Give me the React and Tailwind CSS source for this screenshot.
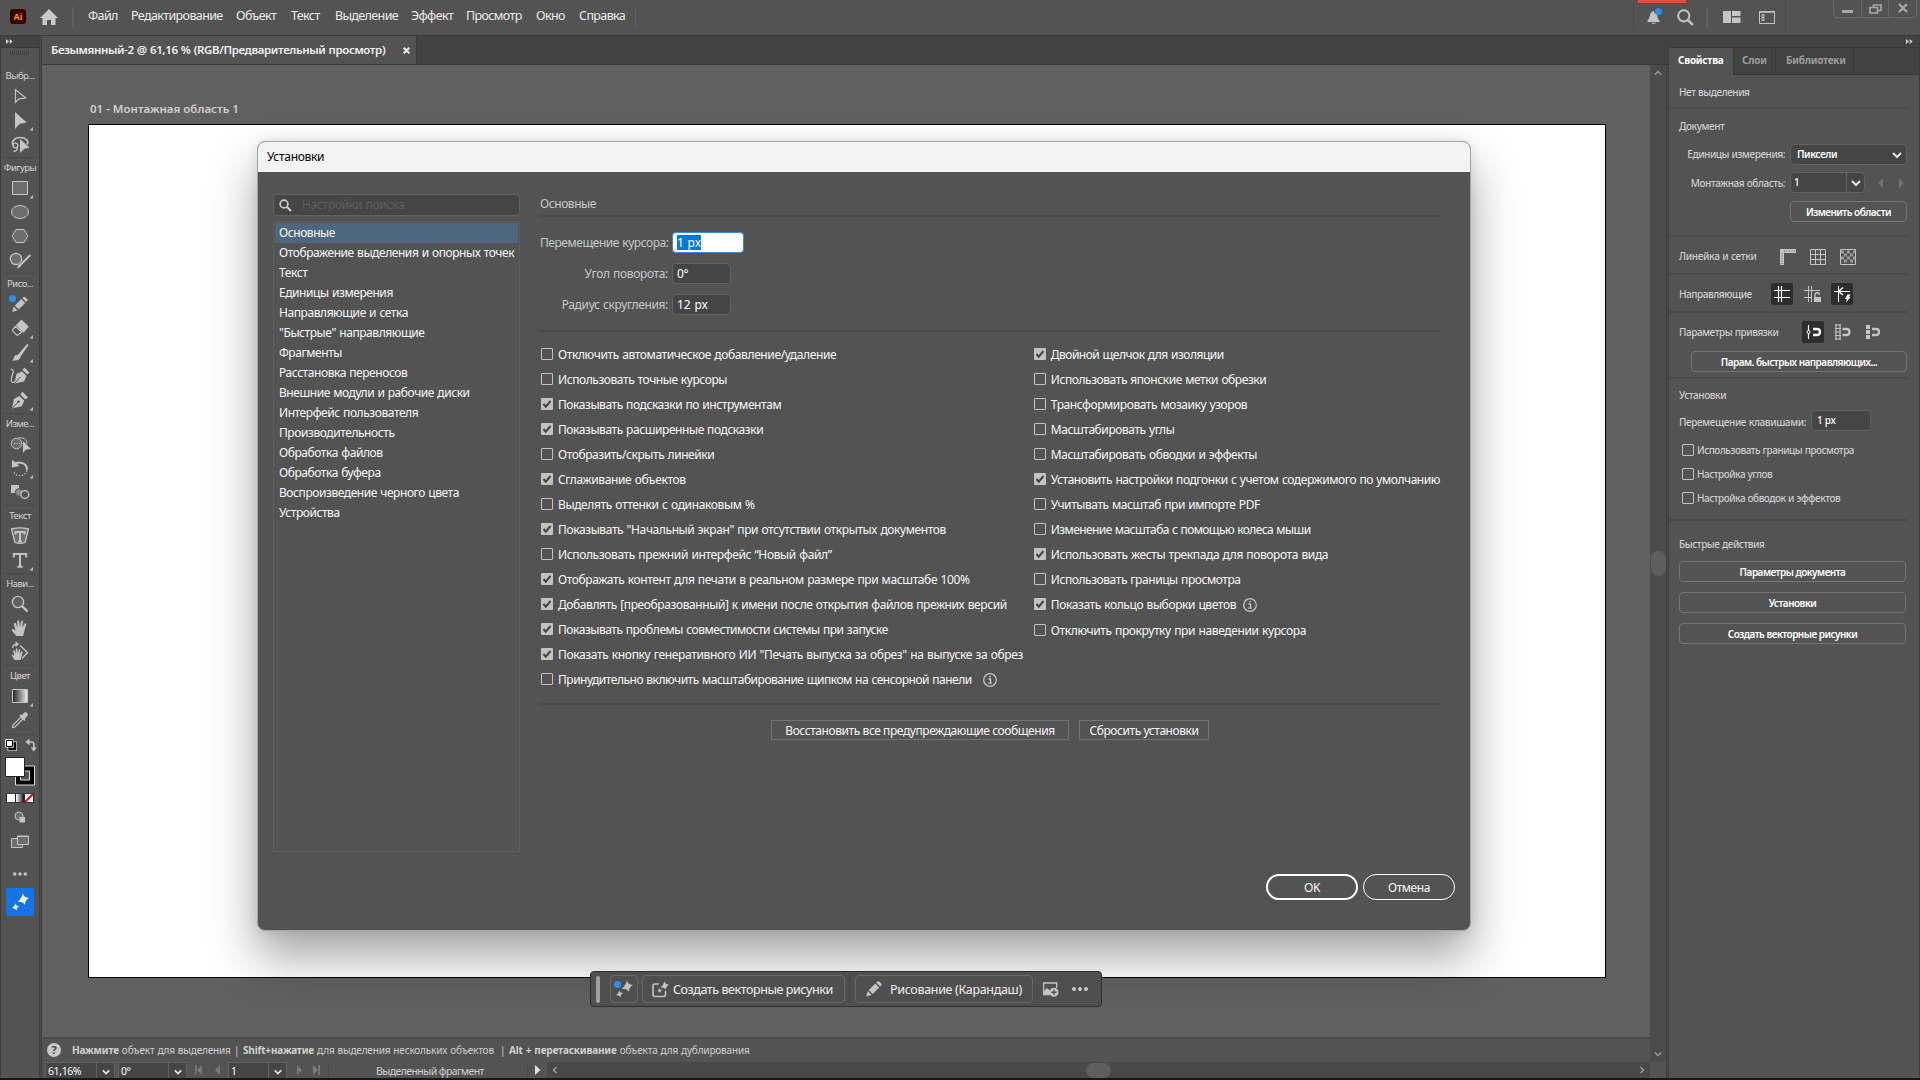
import { useState } from 'react';
import clsx from 'clsx';

const MENU = [
  ['Файл', 'w-[43px]'],
  ['Редактирование', 'w-[105px]'],
  ['Объект', 'w-[55px]'],
  ['Текст', 'w-[44px]'],
  ['Выделение', 'w-[76px]'],
  ['Эффект', 'w-[55px]'],
  ['Просмотр', 'w-[70px]'],
  ['Окно', 'w-[43px]'],
  ['Справка', 'w-[56px]'],
];

const CATEGORIES = [
  'Основные',
  'Отображение выделения и опорных точек',
  'Текст',
  'Единицы измерения',
  'Направляющие и сетка',
  '"Быстрые" направляющие',
  'Фрагменты',
  'Расстановка переносов',
  'Внешние модули и рабочие диски',
  'Интерфейс пользователя',
  'Производительность',
  'Обработка файлов',
  'Обработка буфера',
  'Воспроизведение черного цвета',
  'Устройства',
];

const LEFT_OPTIONS = [
  { label: 'Отключить автоматическое добавление/удаление', track: 'tracking-[-0.38px]' },
  { label: 'Использовать точные курсоры' },
  { label: 'Показывать подсказки по инструментам', on: true },
  { label: 'Показывать расширенные подсказки', on: true },
  { label: 'Отобразить/скрыть линейки' },
  { label: 'Сглаживание объектов', on: true, track: 'tracking-[-0.38px]' },
  { label: 'Выделять оттенки с одинаковым %', track: 'tracking-[-0.36px]' },
  { label: 'Показывать "Начальный экран" при отсутствии открытых документов', on: true, track: 'tracking-[-0.39px]' },
  { label: 'Использовать прежний интерфейс “Новый файл”', track: 'tracking-[-0.37px]' },
  { label: 'Отображать контент для печати в реальном размере при масштабе 100%', on: true, track: 'tracking-[-0.38px]' },
  { label: 'Добавлять [преобразованный] к имени после открытия файлов прежних версий', on: true, track: 'tracking-[-0.4px]' },
  { label: 'Показывать проблемы совместимости системы при запуске', on: true, track: 'tracking-[-0.46px]' },
  { label: 'Показать кнопку генеративного ИИ "Печать выпуска за обрез" на выпуске за обрез', on: true, track: 'tracking-[-0.35px]' },
  { label: 'Принудительно включить масштабирование щипком на сенсорной панели', track: 'tracking-[-0.48px]', info: 'ml-[11px]' },
];

const RIGHT_OPTIONS = [
  { label: 'Двойной щелчок для изоляции', on: true, track: 'tracking-[-0.5px]' },
  { label: 'Использовать японские метки обрезки' },
  { label: 'Трансформировать мозаику узоров' },
  { label: 'Масштабировать углы' },
  { label: 'Масштабировать обводки и эффекты' },
  { label: 'Установить настройки подгонки с учетом содержимого по умолчанию', on: true },
  { label: 'Учитывать масштаб при импорте PDF' },
  { label: 'Изменение масштаба с помощью колеса мыши', track: 'tracking-[-0.58px]' },
  { label: 'Использовать жесты трекпада для поворота вида', on: true, track: 'tracking-[-0.38px]' },
  { label: 'Использовать границы просмотра' },
  { label: 'Показать кольцо выборки цветов', on: true, info: 'ml-[7px]', track: 'tracking-[-0.39px]' },
  { label: 'Отключить прокрутку при наведении курсора', track: 'tracking-[-0.37px]' },
];

const ICON = '#c4c4c4';

// Every tool is drawn in a 40x24 cell
const TOOLS = {
  select: <path d="M15.500 5.800v12.600l3.600-3.600 6.600-.9z" fill="none" stroke={ICON} strokeWidth="1.200" />,
  direct: <path d="M15 4v17l4.400-5 7.400-1.400z" fill={ICON} />,
  lasso: (
    <>
      <path d="M13.500 13.500c-3-3.500 1-8 6.500-8s9.500 3.500 7 7" fill="none" stroke={ICON} strokeWidth="1.600" />
      <circle cx="15.500" cy="13.500" r="2.400" fill="none" stroke={ICON} strokeWidth="1.300" />
      <path d="M17.500 15c0 3-2 4.500-4 4.500" fill="none" stroke={ICON} strokeWidth="1.300" />
      <path d="M20 7v14l4-4 5.500-1.500z" fill={ICON} />
    </>
  ),
  rect: <path d="M12.500 5.500h15v13h-15z" fill="#6e6e6e" stroke={ICON} />,
  ellipse: <ellipse cx="20" cy="12" rx="8.500" ry="6.500" fill="#6e6e6e" stroke={ICON} />,
  polygon: <path d="M12 12l4-6.500h8l4 6.500-4 6.500h-8z" fill="#6e6e6e" stroke={ICON} />,
  shaper: (
    <>
      <circle cx="16" cy="11" r="5.700" fill="#6e6e6e" stroke={ICON} strokeWidth="1.200" />
      <path d="M16.500 20.500c1-2.500 1.500-4.500 3.500-5l9-9c1.500-1 2.800.3 1.800 1.700l-9 9c-1 2-2.800 3.500-5.300 3.300z" fill={ICON} stroke="#535353" strokeWidth=".6" />
    </>
  ),
  pencil: (
    <>
      <path d="M12.200 20l1.600-5.400 3.800 3.800zM14.800 13.600l6.500-6.500 3.900 3.900-6.500 6.500zM22.300 6.100l1.600-1.400c.8-.6 4.300 2.800 3.600 3.700l-1.400 1.600z" fill={ICON} />
      <circle cx="12.500" cy="6.500" r="3.500" fill="#2d8ceb" />
    </>
  ),
  eraser: (
    <>
      <path d="M21.500 3.500l7.300 7.300-5.300 6-7.700-7.600z" fill={ICON} />
      <path d="M15.500 10.300l-2.600 3.200c-.6.700-.4 1.300 0 1.700l3.600 3.600c.6.500 1.200.4 1.700 0l3.500-2.600z" fill="none" stroke={ICON} strokeWidth="1.200" />
    </>
  ),
  brush: <path d="M12 20.300c2-1 1.500-2.600 2.400-4 1-1.500 2.300-1.600 3.200-1.200L27 4.200c.8-.6 1.700.2 1.200 1.200l-7.700 11.300c.4 2.600-4 4.500-8.500 3.600z" fill={ICON} />,
  curvature: (
    <>
      <path d="M10.500 5c3 0 3.300 2.500 2 5.500s-2 8 .5 8c1.500 0 2.500-1 3.500-2" fill="none" stroke={ICON} strokeWidth="1.200" />
      <path d="M14.500 19.500l2-9.500 5.500-2.500 4.500 4.600-2.500 5.400zM22.500 6l2-2.500 5 5-2.300 2z" fill={ICON} />
      <path d="M14.500 19.500l6-6.500" stroke="#535353" strokeWidth="1" />
    </>
  ),
  pen: (
    <>
      <path d="M12 20.500l2-9.800 5.500-2.700 4.800 4.700-2.600 5.600zM20.300 6.500l2.200-2.700 5.500 5.400-2.500 2.200z" fill={ICON} />
      <path d="M12 20.500l6.300-6.700" stroke="#535353" strokeWidth="1" />
      <circle cx="18.600" cy="13.600" r="1.200" fill="#535353" />
    </>
  ),
  builder: (
    <>
      <circle cx="16.500" cy="11.500" r="5.300" fill="#6e6e6e" stroke={ICON} />
      <path d="M17.500 6.500c2-1.500 9-1.500 9.500 5" fill="none" stroke={ICON} />
      <path d="M14 11.500h9" stroke={ICON} strokeDasharray="1 1.500" />
      <path d="M23 9v12l3-3.500 5-.5z" fill={ICON} />
    </>
  ),
  rotate: (
    <>
      <path d="M14.500 8.500c3-3.500 13-2.500 12.500 5.500" fill="none" stroke={ICON} strokeWidth="2" />
      <path d="M12 3.500v8l7.500-1.500z" fill={ICON} />
      <path d="M26.800 14.500c-1 6-10.500 7.300-13.300 1" fill="none" stroke={ICON} strokeWidth="1.400" strokeDasharray="1.300 1.700" />
    </>
  ),
  blend: (
    <>
      <path d="M11 5h8v8h-8z" fill={ICON} />
      <circle cx="19" cy="12.500" r="3.800" fill="#8a8a8a" stroke="#535353" />
      <circle cx="24.800" cy="14.500" r="3.900" fill="#535353" stroke={ICON} strokeWidth="1.300" />
    </>
  ),
  touchType: (
    <>
      <path d="M11.500 5c5-1.300 12-1.300 17 0l-3.500 13.500c-3 1-7 1-10 0z" fill="#6e6e6e" stroke={ICON} strokeWidth="1.300" />
      <path d="M15.500 10.500V8h9v2.500M20 8v9.500M18 17.500h4" fill="none" stroke={ICON} strokeWidth="2" />
    </>
  ),
  type: <path d="M13.800 9.500V6h12.400v3.500M20 6v12.500M17.300 18.700h5.400" fill="none" stroke={ICON} strokeWidth="2" />,
  zoom: (
    <>
      <circle cx="18" cy="10" r="5.600" fill="#606060" stroke={ICON} strokeWidth="1.400" />
      <path d="M22 14l5.500 5.500" stroke={ICON} strokeWidth="2.400" />
    </>
  ),
  hand: (
    <path d="M16 20c-.5-2-4.500-5-4.200-6.500.5-1 2.200 0 3.700 1.500L14 8c-.2-1.500 1.500-1.700 2-.3l1.500 4-.3-6.300c0-1.600 1.800-1.600 2 0l.8 6 1-5.800c.3-1.500 2-1.200 1.900.3l-.6 6 2-4c.7-1.300 2.200-.7 1.800.8l-2 7c-.4 1.800-.6 3-1.100 4.300z" fill={ICON} />
  ),
  rotateView: (
    <>
      <path d="M14.500 20c-.5-2-3-4-2.800-5 .5-.9 1.600 0 2.600 1l-1-5c-.1-1.200 1.300-1.300 1.700-.2l1 3-.1-4.600c0-1.200 1.400-1.200 1.500 0l.5 4.500.9-4c.3-1.200 1.600-1 1.500.3l-.6 4.200 1.600-2.500c.6-1 1.700-.4 1.400.7L20.500 20z" fill={ICON} />
      <path d="M12.500 8c.5-3 2.500-4 5-4M15.500 2l2.500 2-2.500 2.500M20 5.500l7.500 7-5.500 6" fill="none" stroke={ICON} strokeWidth="1.300" />
    </>
  ),
  gradient: (
    <>
      <defs>
        <linearGradient id="toolGradient"><stop stopColor="#222" /><stop offset="1" stopColor="#eee" /></linearGradient>
      </defs>
      <path d="M12.500 5.500h15v13h-15z" fill="url(#toolGradient)" stroke={ICON} />
    </>
  ),
  dropper: (
    <>
      <path d="M12.500 19.500l.5-2.500 8-8 2 2-8 8z" fill="none" stroke={ICON} strokeWidth="1.200" />
      <path d="M19.300 7.500l1-1 1.500.8 2.300-2.600c1.800-1.600 5 1 3.300 3.200l-2.600 2.500.7 1.500-1 1z" fill={ICON} />
    </>
  ),
};

const TOOL_GROUPS = [
  { label: 'Выбр...', tools: ['select', 'direct+', 'lasso'] },
  { label: 'Фигуры', tools: ['rect+', 'ellipse', 'polygon', 'shaper'] },
  { label: 'Рисо...', tools: ['pencil', 'eraser+', 'brush+', 'curvature', 'pen+'] },
  { label: 'Изме...', tools: ['builder', 'rotate+', 'blend'] },
  { label: 'Текст', tools: ['touchType', 'type+'] },
  { label: 'Нави...', tools: ['zoom', 'hand', 'rotateView'] },
  { label: 'Цвет', tools: ['gradient+', 'dropper'] },
];

function Chevron({ dir = 'down', size = 10, color = '#e6e6e6', width = 2 }) {
  const d = {
    down: 'M1 3l4 4 4-4',
    up: 'M1 7l4-4 4 4',
    left: 'M7 1L3 5l4 4',
    right: 'M3 1l4 4-4 4',
  }[dir];
  return (
    <svg width={size} height={size} viewBox="0 0 10 10" fill="none" stroke={color} strokeWidth={width}>
      <path d={d} />
    </svg>
  );
}

function DoubleChevron() {
  return (
    <svg width="7" height="5" viewBox="0 0 7 5" fill="#d0d0d0">
      <path d="M0 0l3 2.500L0 5zM3.700 0l3 2.500-3 2.500z" />
    </svg>
  );
}

function Sparkles({ size = 18, color = '#fff' }) {
  return (
    <svg width={size} height={size} viewBox="0 0 18 18" fill={color}>
      <path d="M12 0q.3 4.600 6 5-4.400 2.300-4 7-2.400-3.800-7.500-3Q10.800 5.500 12 0z" />
      <path d="M4.300 10.200q.3 2.600 3.700 2.800-2.700 1.300-2.500 4.200-1.500-2.300-4.500-1.900 2.700-1.900 3.300-5.100z" />
    </svg>
  );
}

function Checkbox({ on }) {
  if (!on) return <span className="size-3 shrink-0 rounded-[1px] border border-[#c2c2c2]" />;
  return (
    <svg className="size-3 shrink-0" viewBox="0 0 12 12">
      <rect width="12" height="12" rx="1" fill="#c2c2c2" />
      <path d="M2.500 6l2.300 2.700L9.500 3" fill="none" stroke="#444" strokeWidth="2" />
    </svg>
  );
}

function InfoIcon({ className }) {
  return (
    <svg className={clsx('size-[14px] shrink-0', className)} viewBox="0 0 14 14" fill="none" stroke="#c8c8c8">
      <circle cx="7" cy="7" r="6.300" strokeWidth="1.200" />
      <path d="M5.500 6h2v4M5.300 10.200h3.600M6.300 3.700h1.500" strokeWidth="1.300" />
    </svg>
  );
}

function TopBar() {
  return (
    <header className="flex h-[35px] shrink-0 bg-[#535353]">
      <span className="mt-[9px] ml-[10px] flex h-[15px] w-4 items-center justify-center rounded-[3px] bg-[#330000] text-[9px] font-bold text-[#ff9a00]">
        Ai
      </span>
      <svg className="mt-[9px] ml-[14px] h-4 w-[18px]" viewBox="0 0 18 16" fill="#c8c8c8">
        <path d="M9 0l9 9h-2.500v7H11v-5H7v5H2.500V9H0z" />
      </svg>
      <span className="mt-[7px] ml-[14px] h-5 w-[2px] bg-[#5e5e5e]" />
      <nav className="ml-[14px] flex h-8 items-center text-[12.5px] tracking-[-0.62px] text-[#ebebeb]">
        {MENU.map(([label, width]) => (
          <span key={label} className={clsx('whitespace-nowrap', width)}>{label}</span>
        ))}
      </nav>
      <span className="mt-[7px] h-5 w-px bg-[#626262]" />

      <div className="ml-auto flex h-[35px] w-[287px]">
        <span className="mt-1 h-[26px] w-px bg-[#4a4a4a]" />
        <div className="relative ml-[13px] mt-2 w-4">
          <svg width="16" height="18" viewBox="0 0 16 18" fill="#c4c4c4">
            <path d="M5.500 3.500C2.500 4.500 3.500 9.500.5 12.800V14h12v-1.200C10 10.500 10.500 8 10 6c-2-.2-3-1-3-3zM4.500 14.800h4.500c-.5 1.500-4 1.500-4.500 0z" />
            <circle cx="11.500" cy="3.500" r="3.500" fill="#2d8ceb" />
          </svg>
          <span className="absolute -top-2 -left-[10px] h-1 w-[50px] border border-t-0 border-[#9a2b20] bg-[#dd5144]" />
        </div>
        <svg className="mt-[9px] ml-[14px]" width="17" height="17" viewBox="0 0 17 17" fill="none" stroke="#c4c4c4">
          <circle cx="6.800" cy="6.800" r="5.600" strokeWidth="2" />
          <path d="M11 11l4.800 4.800" strokeWidth="2.500" />
        </svg>
        <span className="mt-[7px] ml-3 h-5 w-[2px] bg-[#5e5e5e]" />
        <svg className="mt-[11px] ml-[15px]" width="18" height="12" viewBox="0 0 18 12" fill="#c4c4c4">
          <path d="M0 0h8v12H0zM9 0h8.500v5H9zM9 6.500h8.500V12H9z" />
        </svg>
        <svg className="mt-[11px] ml-[18px]" width="16" height="13" viewBox="0 0 16 13" fill="none" stroke="#c4c4c4">
          <path d="M.5 .5h15v12H.5z" />
          <path d="M.5 1h15" strokeWidth="1.500" />
          <path d="M3 3.500h2v6H3zM3 6.500h2" />
        </svg>
        <span className="ml-[10px] h-8 w-px bg-[#4a4a4a]" />
        <div className="ml-[47px] flex h-[18px] w-[84px] rounded-b border border-t-0 border-[#686868]">
          <span className="flex w-[28px] justify-center border-r border-[#686868]">
            <span className="mt-[10px] h-[3px] w-[11px] bg-[#a8a8a8]" />
          </span>
          <span className="flex w-[27px] justify-center border-r border-[#686868] pt-1">
            <svg width="13" height="10" viewBox="0 0 13 10" fill="none" stroke="#a8a8a8" strokeWidth="1.600">
              <path d="M4.500 3V1H12v5.500H9M1 3.500h7.500V9H1z" />
            </svg>
          </span>
          <span className="flex flex-1 justify-center pt-[3px]">
            <svg width="10" height="10" viewBox="0 0 10 10" stroke="#a8a8a8" strokeWidth="2.200">
              <path d="M1 1l8 8M9 1L1 9" />
            </svg>
          </span>
        </div>
      </div>
    </header>
  );
}

function Toolbar() {
  return (
    <aside className="flex w-[42px] shrink-0 border-l border-[#3c3c3c] bg-[#535353]">
      <div className="flex w-[38px] flex-col">
        <div className="flex h-3 items-center border-b border-[#3a3a3a] bg-[#424242] pl-[5px]">
          <DoubleChevron />
        </div>
        <div className="mt-[3px] ml-[9px] flex h-1 gap-px">
          {Array.from({ length: 10 }, (_, i) => <span key={i} className="w-px bg-[#3f3f3f]" />)}
        </div>
        <div className="mt-[9px] flex flex-col">
          {TOOL_GROUPS.map(({ label, tools }, i) => (
            <div key={label} className="flex flex-col">
              <div className={clsx('mx-1 mt-[1px] h-px', i > 0 && 'bg-[#484848]')} />
              <div className="mt-[2px] h-4 text-center text-[9.5px] leading-4 tracking-[-0.5px] text-[#d4d4d4]">{label}</div>
              {tools.map((tool) => (
                <svg key={tool} className="-ml-px h-6 w-10" viewBox="0 0 40 24">
                  {TOOLS[tool.replace('+', '')]}
                  {tool.endsWith('+') && <path d="M33 19v3.500h-3.500z" fill={ICON} />}
                </svg>
              ))}
            </div>
          ))}
        </div>
        <svg className="-ml-px h-[188px] w-10" viewBox="0 0 40 188">
          <defs>
            <linearGradient id="modeGradient"><stop stopColor="#fff" /><stop offset="1" stopColor="#111" /></linearGradient>
          </defs>
          <path d="M5 2.500h30" stroke="#484848" />
          {/* default colours + swap */}
          <path d="M9.500 11.500h5.500v5.500h-5.500z" fill="none" stroke="#ddd" strokeWidth="4" />
          <path d="M9.500 11.500h5.500v5.500h-5.500z" fill="none" stroke="#000" strokeWidth="2.500" />
          <path d="M5.500 7.500h7.500v7.500H5.500z" fill="#fff" stroke="#ddd" />
          <path d="M6.500 8.500h6v6h-6z" fill="#fff" stroke="#000" />
          <path d="M28 10h3.500c2 0 2.500 1 2.500 3v4" fill="none" stroke={ICON} strokeWidth="1.600" />
          <path d="M25.500 10l4-3.500v7zM30.500 15.500h6.500l-3.200 4z" fill={ICON} />
          {/* stroke under fill */}
          <path d="M18 36.500h14v14H18z" fill="#535353" stroke="#000" strokeWidth="5" />
          <path d="M15.500 34h19v19h-19z" fill="none" stroke="#ddd" />
          <path d="M20.500 39h9v9h-9z" fill="none" stroke="#ddd" />
          <path d="M5.500 25.500h19v19h-19z" fill="#fff" stroke="#222" />
          <path d="M6 61.500h28v9H6z" fill="#222" />
          <path d="M7 62h8v8H7z" fill="#fff" />
          <path d="M16 62h8v8h-8z" fill="url(#modeGradient)" />
          <path d="M25 62h8v8h-8z" fill="#fff" />
          <path d="M25 70l8-8" stroke="#e00" strokeWidth="2" />
          <circle cx="19" cy="84" r="4" fill="#6e6e6e" stroke={ICON} />
          <path d="M19.500 85h5.500v5.500h-5.500z" fill={ICON} />
          <path d="M11.500 106.500h11v9h-11z" fill="#6e6e6e" stroke={ICON} />
          <path d="M17.500 104h11v8.500h-11z" fill="#6e6e6e" stroke={ICON} />
          <path d="M17.500 104.500h11" stroke={ICON} />
          <circle cx="14.700" cy="142" r="1.800" fill={ICON} />
          <circle cx="20" cy="142" r="1.800" fill={ICON} />
          <circle cx="25.300" cy="142" r="1.800" fill={ICON} />
        </svg>
        <div className="-mt-[32px] ml-[5px] flex size-7 items-center justify-center rounded-[2px] bg-[#1473e6]">
          <Sparkles />
        </div>
      </div>
      <div className="ml-auto w-[3px] border-x border-[#3e3e3e] bg-[#4b4b4b]" />
    </aside>
  );
}

function ContextBar() {
  return (
    <div className="absolute top-[971px] left-[590px] flex h-9 w-[512px] items-center rounded border border-[#2f2f2f] bg-[#4f4f4f] text-[12.5px] tracking-[-0.38px] text-[#f0f0f0]">
      <span className="ml-[5px] h-[27px] w-1 rounded-sm bg-[#a0a0a0]" />
      <div className="relative ml-[10px] flex h-7 w-7 items-center justify-center rounded-sm border border-[#686868]">
        <Sparkles color="#c0c0c0" />
        <span className="absolute top-[5px] left-[3px] size-[7px] rounded-full bg-[#2d8ceb]" />
      </div>
      <div className="ml-1 flex h-7 w-[203px] items-center rounded-sm border border-[#686868] pl-[9px]">
        <svg width="17" height="17" viewBox="0 0 17 17" fill="none" stroke="#c4c4c4" strokeWidth="1.600">
          <path d="M7 3H3c-1.500 0-2 .5-2 2v8.500c0 1.500.5 2 2 2h8.500c1.500 0 2-.5 2-2V10" />
          <path d="M12.500 0q.2 3.300 4.500 3.800-3.300 1.500-3 5-1.700-2.700-5.500-2.200Q11.600 4 12.500 0zM7.500 7q.2 1.800 2.500 2-1.800.9-1.600 2.800-1-1.500-3.100-1.200Q7 9.200 7.500 7z" fill="#c4c4c4" stroke="none" />
        </svg>
        <span className="ml-1 pt-[2px] tracking-[-0.42px] whitespace-nowrap">Создать векторные рисунки</span>
      </div>
      <span className="ml-1 h-7 w-[2px] bg-[#474747]" />
      <div className="ml-1 flex h-7 w-[178px] items-center rounded-sm border border-[#686868] pl-[9px]">
        <svg width="18" height="18" viewBox="11 3.500 18 18"><path d="M12.200 20l1.600-5.400 3.800 3.800zM14.800 13.600l6.500-6.500 3.900 3.900-6.500 6.500zM22.300 6.100l1.600-1.400c.8-.6 4.300 2.800 3.600 3.700l-1.400 1.600z" fill="#c4c4c4" /></svg>
        <span className="ml-[7px] pt-[2px] tracking-[-0.33px] whitespace-nowrap">Рисование (Карандаш)</span>
      </div>
      <svg className="ml-[10px]" width="16" height="15" viewBox="0 0 16 15" fill="none" stroke="#c4c4c4">
        <path d="M7 12.500H.7V1h13v5" strokeWidth="1.300" />
        <path d="M1 12V9l3-3 3 2.500V12z" fill="#c4c4c4" stroke="none" />
        <circle cx="11" cy="10.300" r="4.500" fill="#c4c4c4" stroke="none" />
        <path d="M11 7.800v5M8.500 10.300h5" stroke="#4f4f4f" strokeWidth="1.400" />
      </svg>
      <div className="ml-[13px] flex gap-[2px]">
        {[0, 1, 2].map((i) => <span key={i} className="size-1 rounded-full bg-[#c8c8c8]" />)}
      </div>
    </div>
  );
}

function StepArrow({ left, bar }) {
  return (
    <svg width="9" height="10" viewBox="0 0 9 10" fill="#7a7a7a">
      <path d={left ? 'M7 0v10L2 5z' : 'M2 0v10l5-5z'} />
      {bar && <path d={left ? 'M0 0h1.500v10H0z' : 'M7.500 0H9v10H7.500z'} />}
    </svg>
  );
}

function StatusField({ children, className }) {
  return (
    <div className={clsx('flex h-4 border border-b-0 border-[#626262] bg-[#454545] pl-[2px] leading-[17px]', className)}>
      <span className="flex-1">{children}</span>
      <span className="flex w-[18px] items-center justify-center border-l border-[#626262] pt-[3px]"><Chevron size={8} /></span>
    </div>
  );
}

function StatusBars() {
  return (
    <>
      <div className="flex h-[25px] items-center border-t-2 border-[#4a4a4a] bg-[#535353] pb-px pl-[5px] text-[10px] tracking-[-0.17px] text-[#d0d0d0] [word-spacing:0.6px]">
        <span className="flex size-[14px] items-center justify-center rounded-full bg-[#c8c8c8] text-[11px] font-bold text-[#444]">?</span>
        <span className="ml-[11px] w-[162px] whitespace-nowrap"><b>Нажмите</b> объект для выделения</span>
        <span className="w-[9px]">|</span>
        <span className="w-[257px] whitespace-nowrap"><b>Shift+нажатие</b> для выделения нескольких объектов</span>
        <span className="w-[9px]">|</span>
        <span className="whitespace-nowrap"><b>Alt + перетаскивание</b> объекта для дублирования</span>
      </div>
      <div className="flex h-4 bg-[#535353] text-[10.5px] leading-[18px] tracking-[-0.4px] text-white">
        <StatusField className="ml-[3px] w-[70px]">61,16%</StatusField>
        <StatusField className="ml-[3px] w-[69px]">0°</StatusField>
        <div className="flex w-[41px] items-center gap-[9px] pl-2"><StepArrow left bar /><StepArrow left /></div>
        <StatusField className="w-[59px]">1</StatusField>
        <div className="flex w-[41px] items-center gap-[7px] pl-2"><StepArrow /><StepArrow bar /></div>
        <div className="h-4 w-[200px] border-x border-[#4a4a4a] pl-[47px] tracking-[-0.57px] text-[#d0d0d0]">Выделенный фрагмент</div>
        <div className="flex w-[19px] items-center justify-center">
          <svg width="6" height="10" viewBox="0 0 6 10" fill="#ddd"><path d="M0 0v10l5.500-5z" /></svg>
        </div>
        <div className="flex flex-1 items-center justify-between bg-[#484848] px-1">
          <Chevron dir="left" size={8} width={1.5} color="#aaa" />
          <span className="h-[15px] w-[25px] rounded-full bg-[#5e5e5e]" />
          <Chevron dir="right" size={8} width={1.5} color="#aaa" />
        </div>
      </div>
    </>
  );
}

function Workspace() {
  return (
    <main className="flex w-[1627px] shrink-0 flex-col">
      <div className="flex h-[29px] shrink-0 border-b border-[#3a3a3a] bg-[#424242]">
        <div className="flex w-[375px] items-center border-r border-[#3a3a3a] bg-[#535353] pl-[9px] text-[11.5px] font-semibold tracking-[-0.38px] text-[#f0f0f0] [word-spacing:0.6px]">
          <span className="w-[352px] whitespace-nowrap">Безымянный-2 @ 61,16 % (RGB/Предварительный просмотр)</span>
          <svg width="7" height="7" viewBox="0 0 7 7" stroke="#eee" strokeWidth="2"><path d="M.7 .7l5.600 5.600M6.300 .7L.7 6.300" /></svg>
        </div>
      </div>
      <div className="flex flex-1">
        <div className="flex w-[1608px] flex-col">
          <div className="flex flex-1 flex-col bg-[#606060] pl-[46px]">
            <div className="h-[59px] pt-[36px] pl-[2px] text-[11.5px] leading-4 font-semibold tracking-[0] text-[#cfcfcf]">
              01 - Монтажная область 1
            </div>
            <div className="h-[854px] w-[1518px] border border-black bg-white" />
          </div>
          <StatusBars />
        </div>
        <div className="flex w-4 flex-col items-center bg-[#4b4b4b]">
          <div className="flex h-4 items-center"><Chevron dir="up" size={8} width={1.5} color="#aaa" /></div>
          <span className="mt-[470px] h-[25px] w-[15px] rounded-full bg-[#5e5e5e]" />
          <div className="mt-auto flex h-[33px] w-full flex-col items-center">
            <div className="flex h-[17px] items-center"><Chevron size={8} width={1.5} color="#aaa" /></div>
            <div className="h-4 w-full bg-[#535353]" />
          </div>
        </div>
        <div className="w-[3px] border-x border-[#3e3e3e] bg-[#4b4b4b]" />
      </div>
    </main>
  );
}

function Divider() {
  return <div className="mr-3 h-[2px] shrink-0 bg-[#4a4a4a]" />;
}

function PanelButton({ children, className }) {
  return (
    <button
      type="button"
      className={clsx('flex h-[21px] shrink-0 items-center justify-center rounded-sm border border-[#747474] pt-[2px] font-semibold tracking-[-0.52px] text-white', className)}
    >
      {children}
    </button>
  );
}

function IconCell({ active, children }) {
  return (
    <span className={clsx('flex size-[22px] items-center justify-center rounded-[2px]', active && 'bg-[#2d2d2d]')}>
      <svg width="18" height="18" viewBox="0 0 18 18" fill="none" stroke={active ? '#fff' : ICON}>{children}</svg>
    </span>
  );
}

function PropertiesPanel() {
  return (
    <aside className="flex w-[251px] shrink-0 flex-col border-r border-[#3c3c3c] bg-[#535353] text-[10px] font-medium tracking-[-0.44px] text-[#cdcdcd] [word-spacing:0.4px]">
      <div className="flex h-3 items-center justify-end border-b border-[#3a3a3a] bg-[#424242] pr-[6px]">
        <DoubleChevron />
      </div>
      <div className="flex h-[27px] bg-[#424242] leading-[25px] font-bold tracking-[-0.25px] text-[#9c9c9c]">
        <span className="w-16 bg-[#535353] pl-[9px] text-white">Свойства</span>
        <span className="w-[43px] border-x border-b border-[#393939] pl-2">Слои</span>
        <span className="w-[78px] border-r border-b border-[#393939] pl-[10px]">Библиотеки</span>
        <span className="flex-1 border-b border-[#393939]" />
      </div>
      <div className="h-8 pl-[10px] leading-[35px]">Нет выделения</div>
      <Divider />

      <section className="flex h-[126px] flex-col pr-3 pl-[10px]">
        <div className="mt-[7px] h-7 leading-5">Документ</div>
        <div className="flex h-[21px] items-center justify-end">
          <span className="mr-[5px] whitespace-nowrap">Единицы измерения:</span>
          <div className="flex h-[21px] w-[117px] items-center justify-between rounded-sm border border-[#626262] bg-[#454545] pr-1 pl-[6px] font-semibold text-white">
            Пиксели
            <Chevron />
          </div>
        </div>
        <div className="mt-[7px] flex h-[21px] items-center">
          <span className="w-[106px] pt-px text-right whitespace-nowrap">Монтажная область:</span>
          <div className="ml-[5px] flex h-[21px] w-[75px] rounded-sm border border-[#626262] bg-[#454545] leading-[19px] text-white">
            <span className="w-[55px] pl-[3px]">1</span>
            <span className="flex flex-1 items-center justify-center border-l border-[#626262]"><Chevron /></span>
          </div>
          <div className="ml-[11px] flex gap-3 opacity-80"><StepArrow left /><StepArrow /></div>
        </div>
        <PanelButton className="mt-2 ml-auto w-[117px]">Изменить области</PanelButton>
      </section>
      <Divider />

      <section className="flex h-9 items-center pt-1 pl-[10px]">
        <span className="w-[98px] pb-[2px] tracking-[-0.32px]">Линейка и сетки</span>
        <IconCell><path d="M3 17V3h14" strokeWidth="4" /><path d="M3 16V5M5 3h12" stroke="#535353" strokeWidth="1" strokeDasharray="1 1.500" /></IconCell>
        <span className="w-2" />
        <IconCell><path d="M1.500 1.500h15v15h-15zM6.500 1.500v15M11.500 1.500v15M1.500 6.500h15M1.500 11.500h15" /></IconCell>
        <span className="w-2" />
        <IconCell>
          <path d="M1.500 1.500h15v15h-15z" />
          <path d="M2 4h14M2 10h14" strokeWidth="3" strokeDasharray="3 3" stroke="#999" />
          <path d="M5 7h11M5 13h11" strokeWidth="3" strokeDasharray="3 3" stroke="#999" />
        </IconCell>
      </section>
      <Divider />

      <section className="flex h-9 items-center pt-px pl-[10px]">
        <span className="w-[92px] pt-[2px]">Направляющие</span>
        <IconCell active><path d="M5.500 1v16M8.500 1v16M1 5.500h16M1 12.500h16" strokeWidth="1.200" /></IconCell>
        <span className="w-2" />
        <IconCell>
          <path d="M5.500 1v16M8.500 1v16M1 5.500h16M1 12.500h8" />
          <path d="M11 12h7v5h-7z" fill={ICON} stroke="none" />
          <path d="M12 12v-2c0-3 4.500-3 4.500 0" strokeWidth="1.300" />
        </IconCell>
        <span className="w-2" />
        <IconCell active>
          <path d="M1 6.500h16M5.500 1v16" />
          <path d="M10 2.500L5.500 6.500l4.500 3.500" strokeWidth="1.500" />
          <path d="M14.500 9.500h3L16 12h1.500l-4.500 5.500.8-3.500H12z" fill="#fff" stroke="none" />
        </IconCell>
      </section>
      <Divider />

      <section className="flex h-[64px] flex-col pr-3 pl-[10px]">
        <div className="flex h-9 items-center pt-[2px]">
          <span className="w-[123px]">Параметры привязки</span>
          <IconCell active><path d="M4.500 2v14" strokeWidth="1.200" /><circle cx="4.500" cy="9" r="1.500" fill="#2d2d2d" /><path d="M9 6h4c4 0 4 6 0 6H9" strokeWidth="2.300" /></IconCell>
          <span className="w-2" />
          <IconCell><path d="M2 1v16M6 1v16M1 2h6M1 5.500h6M1 9h6M1 12.500h6M1 16h6" strokeWidth="1.200" /><path d="M8.500 6h4c4 0 4 6 0 6h-4" strokeWidth="2.300" /></IconCell>
          <span className="w-2" />
          <IconCell><path d="M4 2v14" strokeWidth="4" strokeDasharray="4 1" /><path d="M8 6h4c4 0 4 6 0 6H8" strokeWidth="2.300" /></IconCell>
        </div>
        <PanelButton className="mt-[2px] ml-3">Парам. быстрых направляющих...</PanelButton>
      </section>
      <Divider />

      <section className="flex h-[140px] flex-col pr-3 pl-[10px]">
        <div className="mt-[6px] h-[25px] leading-[21px]">Установки</div>
        <div className="flex h-[21px] items-center">
          <span className="w-[127px] pt-1 text-right tracking-[-0.38px] whitespace-nowrap">Перемещение клавишами:</span>
          <span className="ml-[5px] h-[21px] w-[60px] rounded-sm border border-[#626262] bg-[#454545] pl-[5px] leading-[19px] text-white">1 px</span>
        </div>
        {['Использовать границы просмотра', 'Настройка углов', 'Настройка обводок и эффектов'].map((label) => (
          <div key={label} className="ml-[3px] flex h-6 translate-y-[7px] items-center gap-[3px]">
            <Checkbox />
            <span className="pt-px tracking-[-0.5px] whitespace-nowrap">{label}</span>
          </div>
        ))}
      </section>
      <Divider />

      <section className="flex flex-col pr-[13px] pl-[10px]">
        <div className="mt-[13px] h-[27px] leading-5">Быстрые действия</div>
        <div className="flex flex-col gap-[10px]">
          <PanelButton>Параметры документа</PanelButton>
          <PanelButton>Установки</PanelButton>
          <PanelButton>Создать векторные рисунки</PanelButton>
        </div>
      </section>
    </aside>
  );
}

function OptionColumn({ options, className }) {
  return (
    <div className={clsx('flex flex-col', className)}>
      {options.map(({ label, on, info, track }, i) => (
        <div key={label} className={clsx('flex h-[25px] items-center', i === 11 && options.length === 12 && 'pt-[2px]')}>
          <span className="-mt-px flex"><Checkbox on={on} /></span>
          <span className={clsx('ml-[5px] whitespace-nowrap', track)}>{label}</span>
          {info && <InfoIcon className={info} />}
        </div>
      ))}
    </div>
  );
}

function PreferencesDialog() {
  const [category, setCategory] = useState('Основные');

  return (
    <div className="absolute top-[141px] left-[257px] flex h-[790px] w-[1214px] flex-col overflow-hidden rounded-lg border border-[#a5a5a5] bg-[#535353] text-[12px] tracking-[-0.43px] text-[#f8f8f8] shadow-[0_26px_48px_rgba(0,0,0,0.36),0_0_12px_rgba(0,0,0,0.1)] [word-spacing:0.6px]">
      <div className="h-[30px] shrink-0 bg-[#f3f3f3] pl-[9px] leading-[30px] tracking-[-0.3px] text-black">Установки</div>
      <div className="mt-[22px] ml-[15px] flex h-[658px]">
        <div className="flex w-[247px] flex-col">
          <div className="flex h-[22px] items-center rounded-sm border border-[#626262] bg-[#454545] pl-[5px]">
            <svg width="13" height="13" viewBox="0 0 13 13" fill="none" stroke="#ccc">
              <circle cx="5" cy="5" r="3.900" strokeWidth="1.600" />
              <path d="M8 8l4 4" strokeWidth="2.200" />
            </svg>
            <span className="ml-[10px] tracking-[-0.3px] text-[#5e5e5e]">Настройки поиска</span>
          </div>
          <ul className="mt-[5px] h-[631px] border border-[#5e5e5e] p-px">
            {CATEGORIES.map((name) => (
              <li
                key={name}
                onClick={() => setCategory(name)}
                className={clsx('h-5 pl-1 leading-5 whitespace-nowrap', name === category && 'bg-[#4f6680]')}
              >
                {name}
              </li>
            ))}
          </ul>
        </div>

        <div className="ml-5 flex w-[900px] flex-col">
          <div className="h-[21px] leading-5 text-[#c8c8c8]">{category}</div>
          <div className="h-[2px] bg-[#4a4a4a]" />
          <div className="mt-[15px] flex flex-col gap-[10px] text-[#c8c8c8]">
            <div className="flex h-[21px] items-center">
              <span className="w-[128px] text-right tracking-[-0.45px] whitespace-nowrap">Перемещение курсора:</span>
              <span className="ml-1 flex h-[21px] w-[72px] items-center rounded-sm border border-[#2d8ceb] bg-white pl-1">
                <span className="bg-[#0078d7] leading-[15px] tracking-normal text-white">1 px</span>
              </span>
            </div>
            <div className="flex h-[21px] items-center">
              <span className="w-[128px] text-right tracking-[-0.35px] whitespace-nowrap">Угол поворота:</span>
              <span className="ml-1 h-[21px] w-[59px] rounded-sm border border-[#626262] bg-[#454545] pl-1 leading-[19px] text-white">0°</span>
            </div>
            <div className="flex h-[21px] items-center">
              <span className="w-[128px] text-right tracking-[-0.35px] whitespace-nowrap">Радиус скругления:</span>
              <span className="ml-1 h-[21px] w-[59px] rounded-sm border border-[#626262] bg-[#454545] pl-1 leading-[19px] tracking-normal text-white">12 px</span>
            </div>
          </div>
          <div className="mt-[15px] h-[2px] bg-[#4a4a4a]" />
          <div className="mt-[10px] flex pl-px">
            <OptionColumn options={LEFT_OPTIONS} className="w-[493px]" />
            <OptionColumn options={RIGHT_OPTIONS} />
          </div>
          <div className="mt-[11px] h-[2px] bg-[#4a4a4a]" />
          <div className="mt-[15px] ml-[231px] flex gap-[10px]">
            <button type="button" className="h-5 w-[298px] border border-[#747474] leading-[19px]">Восстановить все предупреждающие сообщения</button>
            <button type="button" className="h-5 w-[130px] border border-[#747474] leading-[19px]">Сбросить установки</button>
          </div>
        </div>
      </div>
      <div className="mt-[22px] flex justify-end gap-[5px] pr-[15px]">
        <button type="button" className="h-[26px] w-[92px] rounded-[13px] border-2 border-white pt-px">OK</button>
        <button type="button" className="h-[26px] w-[92px] rounded-[13px] border border-white pt-px">Отмена</button>
      </div>
    </div>
  );
}

export default function App() {
  return (
    <div className="relative flex h-[1080px] w-[1920px] flex-col overflow-hidden bg-[#535353] font-['Noto_Sans',sans-serif] select-none">
      <TopBar />
      <div className="flex h-[1043px] border-t border-[#3a3a3a]">
        <Toolbar />
        <Workspace />
        <PropertiesPanel />
      </div>
      <div className="h-[2px] bg-[#14181c]" />
      <PreferencesDialog />
      <ContextBar />
    </div>
  );
}
